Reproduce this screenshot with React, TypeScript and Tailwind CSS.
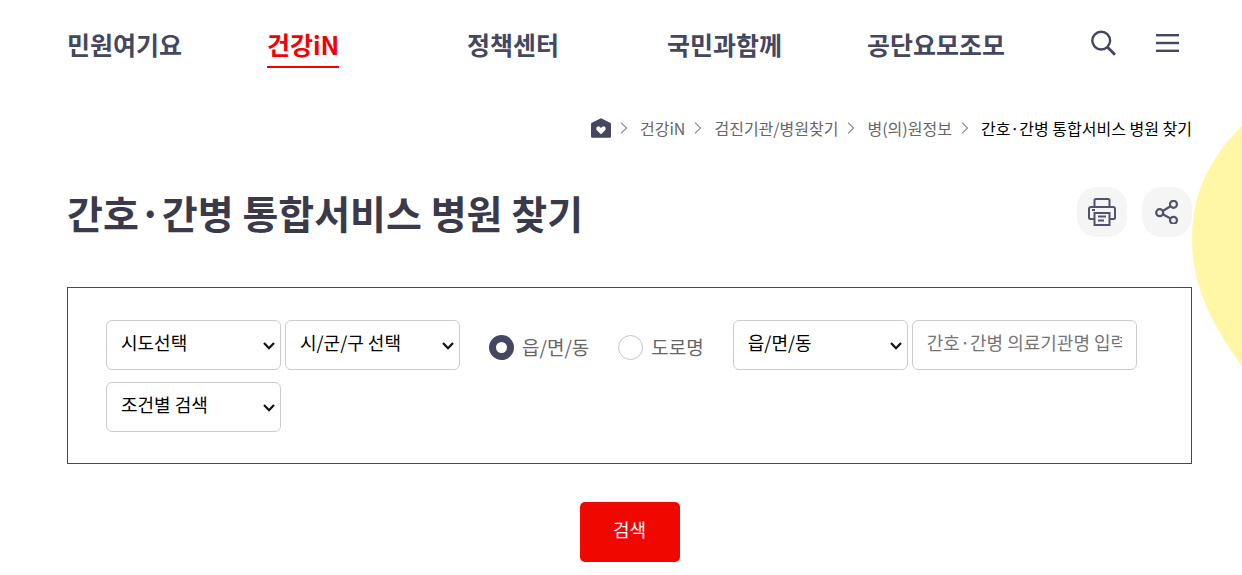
import { useState } from "react";
import type { FormEvent, ReactNode } from "react";

const NAV_ITEMS = ["민원여기요", "건강iN", "정책센터", "국민과함께", "공단요모조모"];
const ACTIVE_NAV = "건강iN";
const CRUMBS = ["건강iN", "검진기관/병원찾기", "병(의)원정보"];
const PAGE_TITLE = "간호·간병 통합서비스 병원 찾기";

function SearchIcon() {
  return (
    <svg className="w-[25px] h-[26px]" viewBox="0 0 25 26" fill="none" stroke="#44475f" strokeWidth="2.4">
      <circle cx="10.2" cy="10.6" r="8.9" />
      <path d="M16.6 17.2 24 24.8" strokeWidth="2.8" />
    </svg>
  );
}

function MenuIcon() {
  return (
    <svg className="w-6 h-[18px]" viewBox="0 0 24 18" fill="#44475f">
      <rect width="23" height="2.4" />
      <rect y="7.8" width="23" height="2.4" />
      <rect y="15.6" width="23" height="2.4" />
    </svg>
  );
}

function HomeIcon() {
  return (
    <svg className="w-5 h-5" viewBox="0 0 20 20">
      <path d="M10 .2 19.2 4.8Q20 5.2 20 6.2V18.6q0 1.2-1.2 1.2H1.2Q0 19.8 0 18.6V6.2Q0 5.2.8 4.8Z" fill="#44475f" />
      <path
        d="M10 16.2 6.3 12.7C4.4 10.8 5.5 8.6 7.4 8.6c1.2 0 2 .7 2.6 1.5.6-.8 1.4-1.5 2.6-1.5 1.9 0 3 2.200 1.100 4.100Z"
        fill="#fff"
      />
    </svg>
  );
}

function CrumbArrow() {
  return (
    <svg className="w-2 h-3 ml-[9px] mr-3" viewBox="0 0 8 12" fill="none" stroke="#888" strokeWidth="1.1">
      <path d="M1 .6 6.6 6 1 11.4" />
    </svg>
  );
}

function PrintIcon() {
  return (
    <svg className="w-7 h-7" viewBox="0 0 28 28" fill="none" stroke="#50536b" strokeWidth="2">
      <path d="M6.5 9V2.500Q6.500 1 8 1h12q1.500 0 1.500 1.500V9" />
      <path d="M6 21H2.500Q1 21 1 19.500V11q0-2 2-2h22q2 0 2 2v8.500q0 1.500-1.500 1.500H22" />
      <path d="M6.500 15h15v12h-15z" />
      <path d="M4 12h3M10 18.500h8M10 22.500h6" />
    </svg>
  );
}

function ShareIcon() {
  return (
    <svg className="w-6 h-6" viewBox="0 0 24 24" fill="none" stroke="#50536b" strokeWidth="2.2">
      <circle cx="4.700" cy="12.700" r="3.500" />
      <circle cx="18.500" cy="4.300" r="3.500" />
      <circle cx="18.500" cy="20.300" r="3.500" />
      <path d="M7.800 11 15.500 6.200M7.800 14.300l7.700 4.200" />
    </svg>
  );
}

function SelectBox({ label, options }: { label: string; options: string[] }) {
  return (
    <div className="relative">
      <select
        aria-label={label}
        className="appearance-none w-[175px] h-[50px] pl-[14px] pr-8 pb-1.5 rounded-md border border-[#ccc] bg-white text-lg text-black"
      >
        {options.map((option) => (
          <option key={option}>{option}</option>
        ))}
      </select>
      <svg
        className="absolute right-[6px] top-[22px] w-3 h-2 pointer-events-none"
        viewBox="0 0 12 8"
        fill="none"
        stroke="#111"
        strokeWidth="2.2"
      >
        <path d="M1 1 6 6.200 11 1" />
      </svg>
    </div>
  );
}

interface RadioProps {
  value: string;
  selected: string;
  onSelect: (value: string) => void;
}

function AddressRadio({ value, selected, onSelect }: RadioProps) {
  return (
    <label className="flex items-center gap-2 text-[19px] text-[#666]">
      <input
        type="radio"
        name="addressType"
        value={value}
        checked={selected === value}
        onChange={() => onSelect(value)}
        className="appearance-none w-[25px] h-[25px] rounded-full border border-[#c4c4cc] bg-white checked:border-[7px] checked:border-[#44475f]"
      />
      {value}
    </label>
  );
}

function RoundButton({ label, children }: { label: string; children: ReactNode }) {
  return (
    <button
      type="button"
      aria-label={label}
      className="w-[50px] h-[50px] rounded-[20px] bg-[#f5f5f5] flex items-center justify-center cursor-pointer"
    >
      {children}
    </button>
  );
}

export default function App() {
  const [addressType, setAddressType] = useState("읍/면/동");

  function handleSubmit(e: FormEvent) {
    e.preventDefault();
  }

  return (
    <div className="relative overflow-hidden bg-white pl-[67px] pr-[50px] pb-[13px] font-['Noto_Sans_CJK_KR','Noto_Sans',sans-serif]">
      {/* Background blob */}
      <svg className="absolute top-[125px] right-0 w-[50px] h-[242px]" viewBox="0 0 50 242" aria-hidden="true">
        <path d="M50 1C6 44 0 85 0 115 0 150 12 190 50 241Z" fill="#fff6a6" />
      </svg>

      {/* Header */}
      <header className="flex h-[86px] items-center">
        <nav className="flex-1 grid grid-cols-5 pt-1">
          {NAV_ITEMS.map((item) => (
            <a
              key={item}
              href="#"
              className={
                item === ACTIVE_NAV
                  ? "justify-self-start border-b-2 border-[#f50000] text-[25px] leading-11 font-bold text-[#f50000]"
                  : "justify-self-start border-b-2 border-transparent text-[25px] leading-11 font-bold text-[#44475f]"
              }
            >
              {item}
            </a>
          ))}
        </nav>
        <div className="w-[125px] flex items-center gap-10 pl-6">
          <button type="button" aria-label="검색 열기" className="cursor-pointer">
            <SearchIcon />
          </button>
          <button type="button" aria-label="전체메뉴" className="cursor-pointer">
            <MenuIcon />
          </button>
        </div>
      </header>

      {/* Breadcrumb */}
      <nav aria-label="현재 위치" className="relative flex items-center justify-end h-[84px] text-base text-[#666]">
        <a href="#" aria-label="홈">
          <HomeIcon />
        </a>
        {CRUMBS.map((crumb) => (
          <span key={crumb} className="flex items-center">
            <CrumbArrow />
            <a href="#">{crumb}</a>
          </span>
        ))}
        <CrumbArrow />
        <span aria-current="page" className="text-black">{PAGE_TITLE}</span>
      </nav>

      {/* Title */}
      <div className="relative flex items-center justify-between h-[84px]">
        <h1 className="text-[39px] leading-[60px] font-bold text-[#3a3a4a]">{PAGE_TITLE}</h1>
        <div className="flex gap-[15px]">
          <RoundButton label="인쇄">
            <PrintIcon />
          </RoundButton>
          <RoundButton label="공유">
            <ShareIcon />
          </RoundButton>
        </div>
      </div>

      {/* Search form */}
      <form onSubmit={handleSubmit} className="relative mt-[33px] flex flex-col items-center">
        <div className="w-full border border-[#44475a] bg-white px-[38px] pt-8 pb-[31px] flex flex-wrap gap-x-1 gap-y-3">
          <SelectBox label="시도" options={["시도선택"]} />
          <SelectBox label="시군구" options={["시/군/구 선택"]} />
          <div className="h-[50px] pt-1 px-[25px] flex items-center gap-[29px]">
            <AddressRadio value="읍/면/동" selected={addressType} onSelect={setAddressType} />
            <AddressRadio value="도로명" selected={addressType} onSelect={setAddressType} />
          </div>
          <SelectBox label="읍면동" options={["읍/면/동"]} />
          <input
            type="text"
            aria-label="의료기관명"
            placeholder="간호·간병 의료기관명 입력"
            className="w-[225px] h-[50px] px-[14px] pb-1.5 rounded-md border border-[#ccc] bg-white text-lg placeholder:text-[#757575]"
          />
          <SelectBox label="조건" options={["조건별 검색"]} />
        </div>
        <button
          type="submit"
          className="mt-[38px] w-[100px] h-[60px] pb-1.5 rounded-[5px] bg-[#f00700] text-lg text-white cursor-pointer"
        >
          검색
        </button>
      </form>
    </div>
  );
}
